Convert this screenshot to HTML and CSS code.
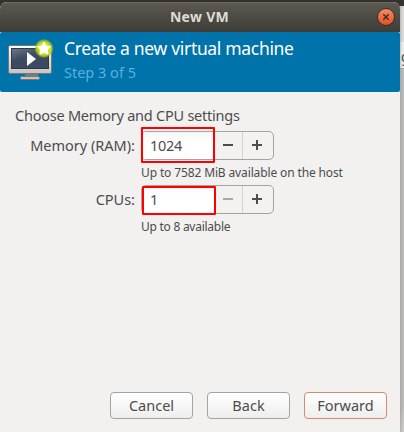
FILE: index.html
```html
<!DOCTYPE html>
<html lang="en">
<head>
<meta charset="utf-8">
<title>New VM</title>
<link rel="stylesheet" href="styles.css">
</head>
<body>
<div class="desktop">
  <div class="window">
    <div class="titlebar">
      <span class="title">New VM</span>
      <button class="close" aria-label="Close">
        <svg width="18" height="18" viewBox="0 0 18 18"><path d="M6.3 6.3l5.400 5.400M11.700 6.300l-5.400 5.400" stroke="#3c2a20" stroke-width="1.4"/></svg>
      </button>
    </div>
    <div class="header">
      <svg class="logo" width="48" height="48" viewBox="0 0 48 48">
        <defs>
          <linearGradient id="frame" x1="0" y1="0" x2="0" y2="1"><stop offset="0" stop-color="#fff"/><stop offset="1" stop-color="#c4c4c4"/></linearGradient>
          <linearGradient id="screen" x1="0" y1="0" x2="0.6" y2="1"><stop offset="0" stop-color="#6c7a88"/><stop offset="0.5" stop-color="#3d4a5f"/><stop offset="1" stop-color="#3b4963"/></linearGradient>
          <radialGradient id="glow"><stop offset="0" stop-color="#fff84a"/><stop offset="0.6" stop-color="#d8e00c"/><stop offset="0.8" stop-color="#b5cc20" stop-opacity="0.8"/><stop offset="1" stop-color="#8fb840" stop-opacity="0"/></radialGradient>
        </defs>
        <rect x="17" y="35" width="13" height="4" fill="#7b7b7b"/>
        <rect x="12.500" y="38.500" width="19" height="3" rx="1" fill="#c4c4c4" stroke="#777"/>
        <rect x="0.500" y="7.500" width="43" height="28" rx="1.500" fill="url(#frame)" stroke="#777"/>
        <rect x="3.500" y="10.500" width="37" height="20" fill="url(#screen)" stroke="#303a48"/>
        <path d="M19 14l9 7-9 7z" fill="#fff"/>
        <circle cx="36" cy="10.500" r="9.800" fill="url(#glow)"/>
        <path d="M36 4l2 4.200 4.500.5-3.300 3.100.9 4.500-4.100-2.200-4.100 2.200.9-4.500-3.300-3.100 4.500-.5z" fill="#fff" stroke="#fff" stroke-linejoin="round"/>
      </svg>
      <div class="heading">
        <h1>Create a new virtual machine</h1>
        <p>Step 3 of 5</p>
      </div>
    </div>
    <div class="content">
      <div class="intro">Choose Memory and CPU settings</div>
      <div class="form">
        <label class="label">Memory (RAM):</label>
        <div class="spin">
          <div class="value">1024</div><i class="step minus"></i><i class="step plus"></i>
          <div class="mark mark-memory"></div>
        </div>
        <div class="hint">Up to 7582 MiB available on the host</div>
        <label class="label">CPUs:</label>
        <div class="spin">
          <div class="value">1</div><i class="step minus off"></i><i class="step plus"></i>
          <div class="mark mark-cpu"></div>
        </div>
        <div class="hint hint-cpu">Up to 8 available</div>
      </div>
      <div class="actions">
        <button class="btn">Cancel</button>
        <button class="btn">Back</button>
        <button class="btn forward">Forward</button>
      </div>
    </div>
  </div>
  <div class="behind"><span class="letter">g</span></div>
</div>
</body>
</html>
```
FILE: styles.css
```css
* { box-sizing: border-box; }
body { margin: 0; font-family: "Noto Sans", sans-serif; font-size: 14.5px; color: #4c4c4c; }
.desktop { width: 404px; height: 432px; display: flex; background: #33322e; overflow: hidden; }
.window { width: 400px; height: 430px; margin-top: 2px; display: flex; flex-direction: column; background: #f2f1f0; border-radius: 7px 7px 0 0; overflow: hidden; }
.titlebar { height: 30px; display: grid; grid-template-columns: 24px 1fr 25px; align-items: center; background: linear-gradient(#5c5950, #3d3c37); border-top: 1px solid #6b695f; }
.title { grid-column: 2; text-align: center; color: #dfdbd2; font-weight: 700; font-size: 14px; letter-spacing: 0.3px; line-height: 20px; margin-top: -2px; }
.close { width: 18px; height: 18px; margin: -2px 0 0 2px; padding: 0; border: 1px solid #383129; border-radius: 50%; background: linear-gradient(#f58a64, #e4511f); display: flex; align-items: center; justify-content: center; }
.close svg { flex: none; }
.header { height: 60px; display: flex; background: #0073aa; border-radius: 2px; padding: 0 8px; }
.logo { flex: none; margin-top: 6px; }
.heading { margin-left: 8px; white-space: nowrap; }
h1 { margin: 4px 0 0; font-size: 17.5px; line-height: 24px; font-weight: 400; letter-spacing: -0.32px; color: #fff; }
.heading p { margin: 2px 0 0; line-height: 20px; color: #5bafe0; }
.content { flex: 1; display: flex; flex-direction: column; padding: 13px 13px 13px 15px; white-space: nowrap; }
.intro { line-height: 20px; letter-spacing: -0.23px; }
.form { display: grid; grid-template-columns: 120px 1fr; column-gap: 6px; grid-template-rows: 29px 25px 29px 24px; padding-top: 6px; }
.label { justify-self: end; line-height: 28px; }
.spin { width: 133px; height: 29px; position: relative; display: flex; border: 1px solid #a5a39f; border-radius: 5px; background: #f3f2f1; }
.value { width: 73px; padding-left: 8px; line-height: 26px; letter-spacing: -0.3px; background: linear-gradient(#f4f4f4, #fff 30%); border-radius: 4px 0 0 4px; }
.step { width: 27px; background: linear-gradient(#4c4c4c, #4c4c4c) 8px 12px / 10px 2px no-repeat; }
.plus { width: 31px; border-left: 1px solid #d5d3d0; background: linear-gradient(#4c4c4c, #4c4c4c) 9px 12px / 10px 2px no-repeat, linear-gradient(#4c4c4c, #4c4c4c) 13px 8px / 2px 10px no-repeat; }
.off { background-image: linear-gradient(#aaa8a4, #aaa8a4); }
.mark { position: absolute; border: 2px solid #f00; border-radius: 1px; }
.mark-memory { left: -1px; top: -5px; width: 74px; height: 36px; }
.mark-cpu { left: 0; top: 0; width: 74px; height: 29px; }
.hint { grid-column: 2; font-size: 12px; line-height: 26px; letter-spacing: -0.13px; }
.hint-cpu { letter-spacing: -0.26px; }
.actions { margin-top: auto; display: flex; justify-content: flex-end; gap: 14px; }
.btn { width: 83px; height: 27px; padding: 0; font: inherit; line-height: 25px; color: #4c4c4c; border: 1px solid #a5a39f; border-radius: 4px; background: linear-gradient(#fff, #efeeed); }
.forward { border-color: #d9896d; }
.behind { width: 4px; margin-top: 6px; overflow: hidden; background: linear-gradient(#e0deda 36px, #f2f1f0 36px 62px, #aaa8a4 62px 63px, #bebdba 63px 400px, #cfcecb); box-shadow: inset 3px 0 3px -2px #8888; }
.letter { display: block; margin: 41px 0 0 1px; font-size: 14px; }
```
